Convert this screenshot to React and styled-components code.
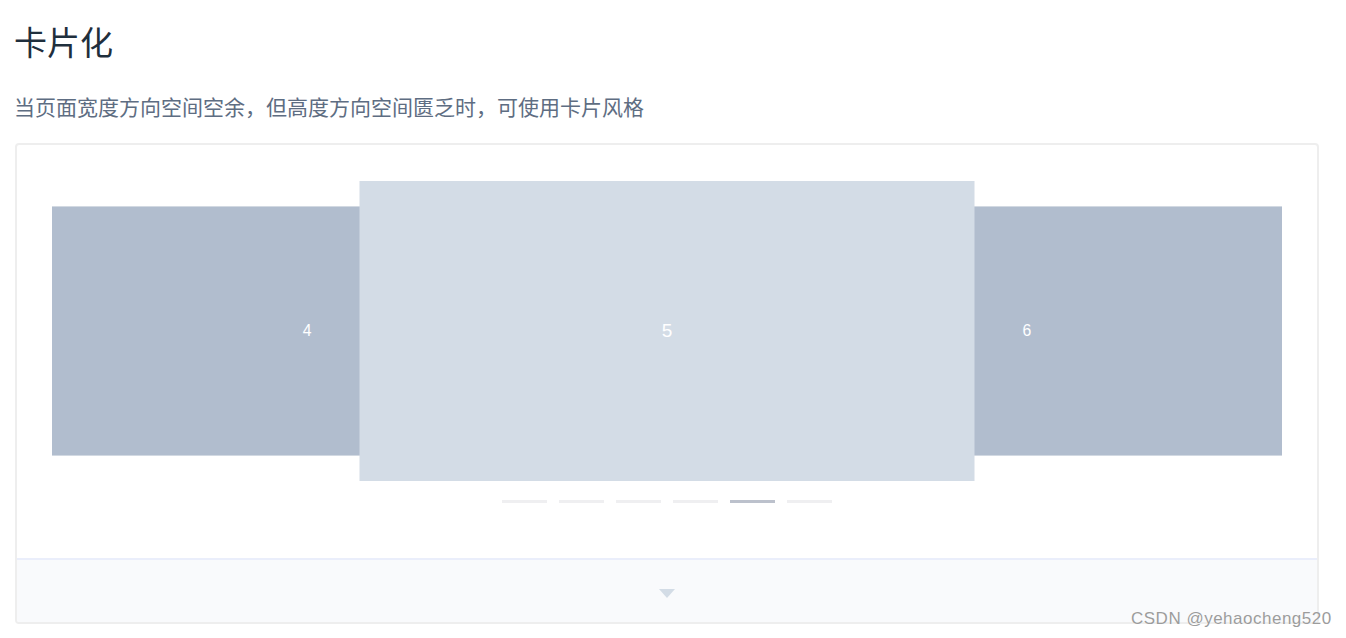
import styled, { createGlobalStyle } from 'styled-components'

const GlobalStyle = createGlobalStyle`
    body {
        margin: 0;
        background: #fff;
        font-family: "Liberation Sans", "Noto Sans CJK SC", sans-serif;
    }
`

const Page = styled.div`
    position: relative;
    width: 1346px;
    height: 638px;
    box-sizing: border-box;
    padding: 19px 0 0 14px;
`

const Title = styled.h3`
    margin: 0;
    font-size: 33px;
    line-height: 44px;
    font-weight: 400;
    color: #1f2f3d;
    font-family: "Noto Sans CJK SC", sans-serif;
`

const Description = styled.p`
    margin: 30px 0 0;
    font-size: 21px;
    line-height: 26px;
    color: #5e6d82;
    font-family: "Noto Sans CJK SC", sans-serif;
`

const DemoBlock = styled.div`
    margin: 24px 0 0 1px;
    width: 1304px;
    box-sizing: border-box;
    border: 2px solid #eeeeee;
    border-radius: 4px;
    overflow: hidden;
`

const DemoSource = styled.div`
    padding: 36px 35px 55px;
`

const Stage = styled.div`
    display: grid;
    height: 300px;
    overflow: hidden;
`

const Card = styled.div`
    grid-area: 1 / 1;
    position: relative;
    width: 50%;
    height: 300px;
    display: flex;
    align-items: center;
    justify-content: center;
    background-color: ${(props) => props.$bg};
    transform: translateX(${(props) => props.$shift}%) scale(${(props) => props.$scale});
    z-index: ${(props) => (props.$active ? 2 : 1)};
    color: #fff;
    font-size: 19px;

    &::after {
        content: '';
        display: ${(props) => (props.$active ? 'none' : 'block')};
        position: absolute;
        inset: 0;
        background: #fff;
        opacity: 0.24;
    }
`

const Indicators = styled.div`
    display: flex;
    justify-content: center;
    gap: 12px;
    margin-top: 19px;
`

const Indicator = styled.span`
    width: 45px;
    height: 3px;
    background-color: ${(props) => (props.$active ? '#bcc1cc' : '#efeff1')};
`

const ControlBar = styled.div`
    height: 64px;
    box-sizing: border-box;
    padding-top: 5px;
    border-top: 2px solid #eaeefb;
    background: #f9fafc;
    display: flex;
    align-items: center;
    justify-content: center;
`

const Caret = styled.span`
    width: 0;
    height: 0;
    border-left: 8px solid transparent;
    border-right: 8px solid transparent;
    border-top: 9px solid #d3dce6;
`

const Watermark = styled.div`
    position: absolute;
    left: 1131px;
    top: 609px;
    font-size: 17px;
    line-height: 20px;
    letter-spacing: 0.5px;
    color: #9c9c9c;
    text-shadow: 0 0 1px #fff;
`

const cards = [
    { label: 4, bg: '#99a9bf', shift: -8.5, scale: 0.83 },
    { label: 5, bg: '#d3dce6', shift: 50, scale: 1, active: true },
    { label: 6, bg: '#99a9bf', shift: 108.5, scale: 0.83 },
]

function App() {
    return (
        <>
            <GlobalStyle />
            <Page>
                <Title>卡片化</Title>
                <Description>当页面宽度方向空间空余，但高度方向空间匮乏时，可使用卡片风格</Description>
                <DemoBlock>
                    <DemoSource>
                        <Stage>
                            {cards.map((card) => (
                                <Card
                                    key={card.label}
                                    $bg={card.bg}
                                    $shift={card.shift}
                                    $scale={card.scale}
                                    $active={card.active}
                                >
                                    {card.label}
                                </Card>
                            ))}
                        </Stage>
                        <Indicators>
                            {[1, 2, 3, 4, 5, 6].map((n) => (
                                <Indicator key={n} $active={n === 5} />
                            ))}
                        </Indicators>
                    </DemoSource>
                    <ControlBar>
                        <Caret />
                    </ControlBar>
                </DemoBlock>
                <Watermark>CSDN @yehaocheng520</Watermark>
            </Page>
        </>
    )
}

export default App
